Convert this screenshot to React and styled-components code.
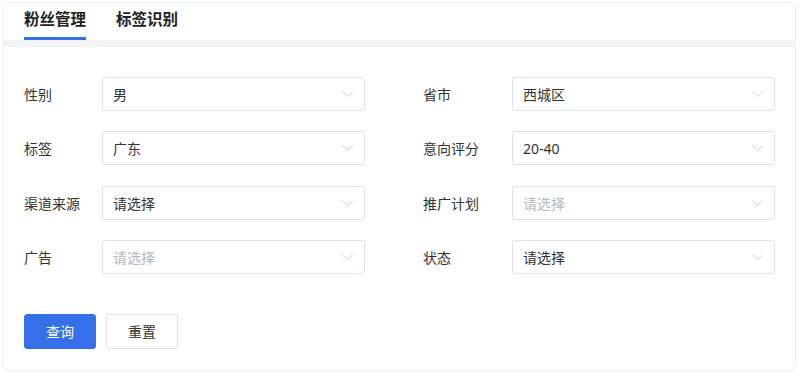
import React, { useState } from "react";
import styled, { createGlobalStyle } from "styled-components";

const GlobalStyle = createGlobalStyle`
  html, body {
    margin: 0;
    padding: 0;
    background: #ffffff;
  }
  body {
    font-family: "Noto Sans", "Noto Sans CJK SC", sans-serif;
    color: #333333;
  }
`;

const Page = styled.div`
  padding: 2px 4px 3px 2px;
`;

const Card = styled.div`
  border: 1px solid #edf1f8;
  border-radius: 6px;
  background: #ffffff;
  overflow: hidden;
`;

const TabBar = styled.div`
  display: flex;
  gap: 30px;
  height: 37px;
  padding-left: 21px;
  box-sizing: border-box;
`;

const Tab = styled.div`
  box-sizing: border-box;
  height: 37px;
  padding-top: 5px;
  font-size: 15.5px;
  line-height: 22px;
  font-weight: ${(p) => (p.$active ? 700 : 600)};
  color: #222222;
  border-bottom: 3px solid ${(p) => (p.$active ? "#3570ea" : "transparent")};
  cursor: pointer;
`;

const Strip = styled.div`
  height: 7px;
  background: #f3f4f6;
`;

const Form = styled.div`
  padding: 30px 20px 21px 21px;
`;

const Grid = styled.div`
  display: grid;
  grid-template-columns: 341px 352px;
  column-gap: 58px;
  row-gap: 20.33px;
`;

const Field = styled.div`
  display: flex;
  align-items: center;
  height: 34px;
`;

const Label = styled.div`
  width: ${(p) => p.$width}px;
  flex-shrink: 0;
  font-size: 14px;
  color: #333333;
`;

const Select = styled.div`
  box-sizing: border-box;
  width: 263px;
  height: 34px;
  border: 1px solid #dfe2e8;
  border-radius: 3px;
  display: flex;
  align-items: center;
  justify-content: space-between;
  padding: 0 10px 0 10px;
  font-size: 14px;
  color: ${(p) => (p.$placeholder ? "#b4b7bd" : "#333333")};
  cursor: pointer;
`;

const Actions = styled.div`
  display: flex;
  gap: 10px;
  margin-top: 40px;
`;

const Button = styled.button`
  box-sizing: border-box;
  width: 72px;
  height: 35px;
  border-radius: 3px;
  font-family: inherit;
  font-size: 14px;
  cursor: pointer;
  border: 1px solid ${(p) => (p.$primary ? "#3570ea" : "#dfe2e8")};
  background: ${(p) => (p.$primary ? "#3570ea" : "#ffffff")};
  color: ${(p) => (p.$primary ? "#ffffff" : "#333333")};
`;

const Chevron = () => (
  <svg width="13" height="8" viewBox="0 0 13 8" fill="none">
    <polyline points="1,1.5 6.5,6.5 12,1.5" stroke="#cdd0d5" strokeWidth="1" />
  </svg>
);

const fields = [
  { label: "性别", value: "男", width: 78 },
  { label: "省市", value: "西城区", width: 89 },
  { label: "标签", value: "广东", width: 78 },
  { label: "意向评分", value: "20-40", width: 89 },
  { label: "渠道来源", value: "请选择", width: 78 },
  { label: "推广计划", value: "请选择", width: 89, placeholder: true },
  { label: "广告", value: "请选择", width: 78, placeholder: true },
  { label: "状态", value: "请选择", width: 89 },
];

const App = () => {
  const [tab, setTab] = useState(0);

  return (
    <Page>
      <GlobalStyle />
      <Card>
        <TabBar>
          {["粉丝管理", "标签识别"].map((name, i) => (
            <Tab key={name} $active={tab === i} onClick={() => setTab(i)}>
              {name}
            </Tab>
          ))}
        </TabBar>
        <Strip />
        <Form>
          <Grid>
            {fields.map((f) => (
              <Field key={f.label}>
                <Label $width={f.width}>{f.label}</Label>
                <Select $placeholder={f.placeholder}>
                  <span>{f.value}</span>
                  <Chevron />
                </Select>
              </Field>
            ))}
          </Grid>
          <Actions>
            <Button $primary>查询</Button>
            <Button>重置</Button>
          </Actions>
        </Form>
      </Card>
    </Page>
  );
};

export default App;
